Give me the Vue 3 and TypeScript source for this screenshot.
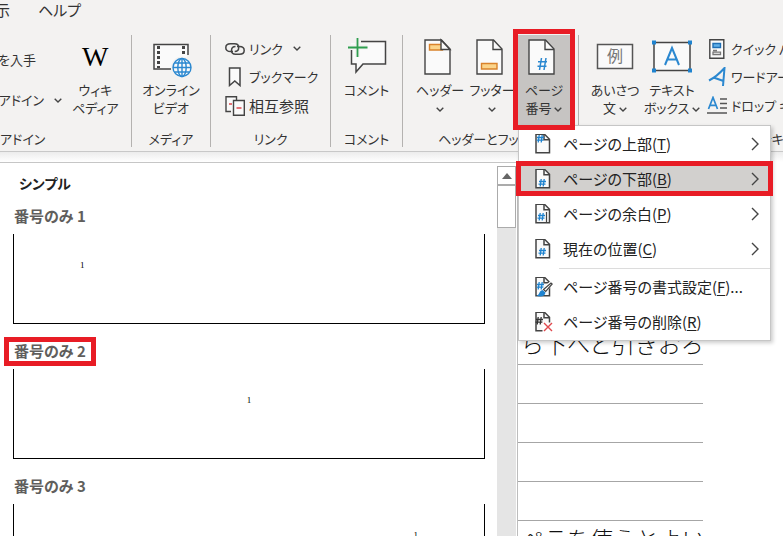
<script setup lang="ts">
type MenuIcon = 'top' | 'bottom' | 'margin' | 'current' | 'format' | 'remove'

interface MenuEntry {
  icon: MenuIcon
  text: string
  key: string
  tail: string
  submenu: boolean
  active?: boolean
  separated?: boolean
}

interface GalleryItem {
  name: string
  align: 'left' | 'center' | 'right'
  marked?: boolean
}

const tabs: string[] = ['表示', 'ヘルプ']

const menu: MenuEntry[] = [
  { icon: 'top', text: 'ページの上部(', key: 'T', tail: ')', submenu: true },
  { icon: 'bottom', text: 'ページの下部(', key: 'B', tail: ')', submenu: true, active: true },
  { icon: 'margin', text: 'ページの余白(', key: 'P', tail: ')', submenu: true },
  { icon: 'current', text: '現在の位置(', key: 'C', tail: ')', submenu: true },
  { icon: 'format', text: 'ページ番号の書式設定(', key: 'F', tail: ')...', submenu: false, separated: true },
  { icon: 'remove', text: 'ページ番号の削除(', key: 'R', tail: ')', submenu: false },
]

const gallery: GalleryItem[] = [
  { name: '番号のみ 1', align: 'left' },
  { name: '番号のみ 2', align: 'center', marked: true },
  { name: '番号のみ 3', align: 'right' },
]

const lines: string[] = ['ら下へと引きおろ', '', '', '', '', 'ペラを使うとよい']

const hashAt: Record<MenuIcon, string> = {
  top: 'translate(2 1)',
  bottom: 'translate(4 10)',
  margin: 'translate(3 9)',
  current: 'translate(4 9)',
  format: 'translate(2 5)',
  remove: 'translate(1 5)',
}
</script>

<template>
  <div class="app">
    <header class="ribbon">
      <nav class="tabs">
        <button v-for="tab in tabs" :key="tab" class="tab">{{ tab }}</button>
      </nav>

      <div class="groups">
        <section class="group addins">
          <div class="tools">
            <div class="stack wide">
              <button class="small">を入手</button>
              <button class="small">
                アドイン
                <svg class="chev" viewBox="0 0 8 5"><path d="M.7.7 4 4 7.3.7" /></svg>
              </button>
            </div>
            <button class="large">
              <span class="pic wiki">W</span>
              <span>ウィキ</span>
              <span>ペディア</span>
            </button>
          </div>
          <h2 class="caption">アドイン</h2>
        </section>

        <section class="group media">
          <div class="tools centered">
            <button class="large">
              <svg class="pic" viewBox="0 0 40 40">
                <path d="M2 10h34v24H2z" fill="#fafafa" />
                <path d="M37 20V9.500H3V34h17" fill="none" stroke="#444" stroke-width="1.500" />
                <path d="M7.500 11v22M32.500 11v10" fill="none" stroke="#444" stroke-width="3" stroke-dasharray="3 2" />
                <circle cx="31" cy="32.500" r="11" fill="#f3f2f1" />
                <g fill="none" stroke="#2b88d0" stroke-width="1.400">
                  <circle cx="31" cy="32.500" r="9" fill="#fafafa" />
                  <ellipse cx="31" cy="32.500" rx="4.200" ry="9" />
                  <path d="M31 23.500v18M22 32.500h18M23.500 28h15M23.500 37h15" />
                </g>
              </svg>
              <span>オンライン</span>
              <span>ビデオ</span>
            </button>
          </div>
          <h2 class="caption">メディア</h2>
        </section>

        <section class="group links">
          <div class="tools">
            <div class="stack">
              <button class="small">
                <svg class="mini" viewBox="0 0 20 20">
                  <g fill="none" stroke="#444" stroke-width="1.500">
                    <path d="M8 12.500H5.500C2.500 12.500.8 11 .8 8.700S2.500 4.800 5.500 4.800h4c3 0 4.200 1.700 4.200 3.700 0 2.200-1.500 4-4 4" />
                    <path d="M12 7.500h2.500c3 0 4.700 1.600 4.700 3.900s-1.700 3.800-4.700 3.800h-4c-3 0-4-1.700-4-3.700 0-2.200 1.500-4 4-4" />
                  </g>
                </svg>
                リンク
                <svg class="chev" viewBox="0 0 8 5"><path d="M.7.7 4 4 7.3.7" /></svg>
              </button>
              <button class="small">
                <svg class="mini" viewBox="0 0 20 20">
                  <path d="M4.500 1h10.500v17.500L9.800 14l-5.300 4.500z" fill="#fafafa" stroke="#444" stroke-width="1.500" />
                </svg>
                ブックマーク
              </button>
              <button class="small kanji">
                <svg class="mini" viewBox="0 0 20 20">
                  <g fill="#fafafa" stroke="#444" stroke-width="1.400">
                    <path d="M6 15.500H1V.8h10.500V4" />
                    <path d="M8.500 4.500h10.800v14.800H8.500z" />
                  </g>
                  <path d="M4 8h3M11.500 12h5" stroke="#e0484d" stroke-width="1.500" />
                </svg>
                相互参照
              </button>
            </div>
          </div>
          <h2 class="caption">リンク</h2>
        </section>

        <section class="group comments">
          <div class="tools centered">
            <button class="large">
              <svg class="pic" viewBox="0 0 40 40">
                <path d="M4 8h34v22H15l-7 8v-8H4z" fill="#fafafa" />
                <path d="M14 6.500h24.500V29H16l-7 8v-8H4.500V15" fill="none" stroke="#444" stroke-width="1.500" />
                <path d="M10.500 2v20M1 12h19.500" stroke="#f3f2f1" stroke-width="5" />
                <path d="M10.500 3v19M1 12.500h19.500" stroke="#2f9e4f" stroke-width="1.800" />
              </svg>
              <span>コメント</span>
            </button>
          </div>
          <h2 class="caption">コメント</h2>
        </section>

        <section class="group headers">
          <div class="tools">
            <button class="large slot">
              <svg class="pic" viewBox="0 0 40 40">
                <path d="M5 5h16.500L30 14v25H5z" fill="#fafafa" stroke="#444" stroke-width="1.400" />
                <path d="M9.500 9.500h13v5.500h-13z" fill="#fbd48a" stroke="#d9822b" stroke-width="1.400" />
                <path d="M21 5v9.500h9z" fill="#fafafa" stroke="#444" stroke-width="1.400" />
              </svg>
              <span>ヘッダー</span>
              <span><svg class="chev" viewBox="0 0 8 5"><path d="M.7.7 4 4 7.3.7" /></svg></span>
            </button>
            <button class="large slot">
              <svg class="pic" viewBox="0 0 40 40">
                <path d="M5 5h16.500L30 14v25H5z" fill="#fafafa" stroke="#444" stroke-width="1.400" />
                <path d="M21 5v9.500h9" fill="none" stroke="#444" stroke-width="1.400" />
                <path d="M9.500 28.500H25V34H9.500z" fill="#fbd48a" stroke="#d9822b" stroke-width="1.400" />
              </svg>
              <span>フッター</span>
              <span><svg class="chev" viewBox="0 0 8 5"><path d="M.7.7 4 4 7.3.7" /></svg></span>
            </button>
            <div class="dropdown">
              <button class="large slot open" aria-haspopup="menu" aria-expanded="true">
                <svg class="pic" viewBox="0 0 40 40">
                  <path d="M5 5h16.500L30 14v25H5z" fill="#fafafa" stroke="#444" stroke-width="1.400" />
                  <path d="M21 5v9.500h9" fill="none" stroke="#444" stroke-width="1.400" />
                  <path d="M17.500 23l-2 12M22 23l-2 12M14 26.700h9M13.500 31.300h9" stroke="#2b88d0" stroke-width="1.500" />
                </svg>
                <span>ページ</span>
                <span>番号 <svg class="chev" viewBox="0 0 8 5"><path d="M.7.7 4 4 7.3.7" /></svg></span>
              </button>
              <div class="menu" role="menu">
                <template v-for="entry in menu" :key="entry.icon">
                  <hr v-if="entry.separated" class="rule">
                  <button class="entry" :class="{ active: entry.active }" role="menuitem">
                    <svg class="mini" viewBox="0 0 20 20">
                      <path d="M3 .3h8.500l5 5v13.500H3z" fill="#fafafa" stroke="#444" stroke-width="1.500" />
                      <path d="M11 .3v5.500h5.500" fill="none" stroke="#444" stroke-width="1.500" />
                      <path
                        :transform="hashAt[entry.icon]"
                        d="M4.200 0 3.200 7.500M7.200 0l-1 7.500M2 2.500h7M1.500 5.200h7"
                        :stroke="entry.icon === 'remove' ? '#333' : '#1f83cf'"
                        stroke-width="1.300"
                      />
                      <path v-if="entry.icon === 'margin'" d="M13.500 8v10" stroke="#444" stroke-width="1.200" />
                      <g v-if="entry.icon === 'format'">
                        <path d="M9 12 17 4.500l3 3-7.500 8z" fill="#fff" />
                        <path d="M10.500 12.500 18 6l1.200 1-6.500 7.500z" fill="#fff" stroke="#444" stroke-width="1.200" />
                        <path d="M3.500 18.500c3 0 2.500-5 6-5.500l3 2.500c-.5 4-5 5-9 3z" fill="#1f83cf" />
                      </g>
                      <g v-if="entry.icon === 'remove'">
                        <path d="M9.500 10.500h10V20h-10z" fill="#fff" />
                        <path d="m11 11 8 8m0-8-8 8" stroke="#e0484d" stroke-width="1.400" />
                      </g>
                    </svg>
                    <span class="words">{{ entry.text }}<u>{{ entry.key }}</u>{{ entry.tail }}</span>
                    <svg v-if="entry.submenu" class="arrow" viewBox="0 0 8 14"><path d="m1 1 6 6-6 6" /></svg>
                  </button>
                </template>
              </div>
            </div>
          </div>
          <h2 class="caption">ヘッダーとフッター</h2>
        </section>

        <section class="group texts">
          <div class="tools">
            <button class="large greet">
              <svg class="pic" viewBox="0 0 40 40">
                <path d="M2.500 9.500h35v24h-35z" fill="#fafafa" stroke="#555" stroke-width="1.500" />
                <text x="20" y="27" text-anchor="middle" font-size="16" fill="#777">例</text>
              </svg>
              <span>あいさつ</span>
              <span>文 <svg class="chev" viewBox="0 0 8 5"><path d="M.7.7 4 4 7.3.7" /></svg></span>
            </button>
            <button class="large box">
              <svg class="pic" viewBox="0 0 40 40">
                <path d="M2 7.500h36v28H2z" fill="#fafafa" stroke="#444" stroke-width="1.500" />
                <path d="M0 5.500h4v4H0zM36 5.500h4v4h-4zM0 33.500h4v4H0zM36 33.500h4v4h-4z" fill="#1f83cf" />
                <path d="m13 30 7-17 7 17M15.500 24.500h9" fill="none" stroke="#2b88d0" stroke-width="2" />
              </svg>
              <span>テキスト</span>
              <span>ボックス <svg class="chev" viewBox="0 0 8 5"><path d="M.7.7 4 4 7.3.7" /></svg></span>
            </button>
            <div class="stack">
              <button class="small">
                <svg class="mini" viewBox="0 0 20 20">
                  <path d="M2.800.8h14v18.400h-14z" fill="#fafafa" stroke="#444" stroke-width="1.400" />
                  <path d="M6 4.500h7.500v4H6z" fill="#62b0e8" stroke="#1f6fb5" stroke-width="1.400" />
                  <path d="M6 11.500h4M6 15.500h7.500v-2.300H6z" fill="none" stroke="#777" stroke-width="1.300" />
                </svg>
                クイック パーツ
              </button>
              <button class="small">
                <svg class="mini" viewBox="0 0 20 20">
                  <path d="M2 13.500C8 10.500 13 6 17.500 1L16 19M6.500 10.500 16.500 14" fill="none" stroke="#2b88d0" stroke-width="2" />
                </svg>
                ワードアート
              </button>
              <button class="small">
                <svg class="mini" viewBox="0 0 20 20">
                  <path d="M1.500 13 6 1.500 10.500 13M3 9.300h6" fill="none" stroke="#2b88d0" stroke-width="1.700" />
                  <path d="M13 3h7M13 7.500h7M13 12h7M0 17h20" stroke="#555" stroke-width="1.400" />
                </svg>
                ドロップ キャップ
              </button>
            </div>
          </div>
          <h2 class="caption">テキスト</h2>
        </section>
      </div>
    </header>

    <main class="workspace">
      <aside class="gallery">
        <div class="list">
          <h2 class="title">シンプル</h2>
          <section v-for="item in gallery" :key="item.name" class="item">
            <h3 class="name"><span :class="{ marked: item.marked }">{{ item.name }}</span></h3>
            <button class="preview" :class="item.align" :aria-label="item.name">1</button>
          </section>
        </div>
        <div class="scroll">
          <button class="up" aria-label="上へスクロール">
            <svg viewBox="0 0 10 6"><path d="M0 6 5 0l5 6z" fill="#666" /></svg>
          </button>
          <div class="thumb"></div>
        </div>
      </aside>
      <article class="document">
        <p v-for="(line, i) in lines" :key="i" class="line">{{ line }}</p>
      </article>
    </main>
  </div>
</template>

<style>
body {
  margin: 0;
  background: #fff;
}
</style>

<style scoped>
.app {
  display: flex;
  flex-direction: column;
  height: 100vh;
  overflow: hidden;
  color: #333;
  font: 13px/18px "Noto Sans CJK JP", sans-serif;
  font-feature-settings: "palt";
}
button {
  margin: 0;
  padding: 0;
  border: 0;
  background: none;
  color: inherit;
  font: inherit;
  font-feature-settings: inherit;
  white-space: nowrap;
}
h2,
h3,
p {
  margin: 0;
  font: inherit;
}
.ribbon {
  position: relative;
  z-index: 2;
  flex: none;
  padding-bottom: 4px;
  border-bottom: 1px solid #c8c8c8;
  background: #f3f2f1;
}
.tabs {
  display: flex;
  gap: 28px;
  height: 35px;
  margin-left: -20px;
}
.tab {
  height: 20px;
  font-size: 15px;
}
.groups {
  display: flex;
}
.group {
  flex: none;
  box-sizing: border-box;
  border-right: 1px solid #b4b2b0;
}
.tools {
  display: flex;
  height: 96px;
}
.centered {
  justify-content: center;
}
.caption {
  line-height: 16px;
  text-align: center;
  white-space: nowrap;
}
.addins {
  width: 132px;
}
.addins .caption {
  margin-right: 88px;
}
.media {
  width: 79px;
}
.links {
  width: 120px;
}
.links .tools {
  padding-left: 14px;
}
.comments {
  width: 72px;
}
.headers {
  width: 176px;
}
.headers .tools {
  padding-left: 11px;
}
.texts {
  width: 408px;
}
.texts .tools {
  padding-left: 12px;
}
.large {
  display: flex;
  flex-direction: column;
  align-items: center;
  height: 90px;
}
.large span {
  min-height: 18px;
}
.slot {
  width: 52px;
}
.greet {
  width: 48px;
}
.box {
  width: 66px;
  margin-right: 2px;
}
.pic {
  display: block;
  flex: none;
  width: 40px;
  height: 40px;
  margin-bottom: 6px;
  overflow: visible;
}
.wiki {
  color: #000;
  font: 28px/44px "Liberation Serif", serif;
  text-align: center;
}
.stack {
  display: flex;
  flex-direction: column;
}
.small {
  display: flex;
  align-items: center;
  gap: 4px;
  height: 29px;
}
.kanji {
  font-size: 15px;
}
.small .chev {
  margin-left: 6px;
}
.stack .small:first-child {
  height: 27px;
}
.wide {
  align-items: flex-end;
  width: 62px;
  margin-right: 10px;
  padding-top: 5px;
}
.wide .small,
.wide .small:first-child {
  height: 40px;
}
.wide .small:first-child {
  margin-right: 26px;
}
.mini {
  flex: none;
  width: 20px;
  height: 20px;
}
.chev {
  flex: none;
  width: 8px;
  height: 5px;
  vertical-align: middle;
}
.chev path,
.arrow path {
  fill: none;
  stroke: #444;
  stroke-width: 1.4;
}
.dropdown {
  position: relative;
}
.open {
  background: #c6c4c2;
}
.dropdown::after {
  content: "";
  position: absolute;
  z-index: 3;
  inset: -6px -5px 1px;
  border: 5px solid #e81c25;
  pointer-events: none;
}
.menu {
  position: absolute;
  z-index: 2;
  top: 90px;
  left: 0;
  width: 251px;
  padding-bottom: 1px;
  border: 1px solid #c6c6c6;
  background: #fff;
  box-shadow: 2px 2px 4px rgba(0, 0, 0, 0.2);
  color: #222;
}
.entry {
  position: relative;
  display: flex;
  align-items: center;
  gap: 10px;
  box-sizing: border-box;
  width: 100%;
  height: 35px;
  padding: 0 11px 0 14px;
  font-size: 15px;
}
.active {
  background: #d2d0ce;
}
.active::after {
  content: "";
  position: absolute;
  inset: 0 -3px;
  border: 5px solid #e81c25;
}
.words {
  flex: 1;
  text-align: left;
}
.words u {
  text-underline-offset: 2px;
}
.arrow {
  width: 8px;
  height: 14px;
}
.rule {
  height: 1px;
  margin: 2px 0 0 40px;
  border: 0;
  background: #dcdcdc;
}
.workspace {
  display: flex;
  flex: 1;
  min-height: 0;
  padding-top: 10px;
  background: linear-gradient(#ececec, #fff 10px);
}
.gallery {
  display: flex;
  flex: none;
  box-sizing: border-box;
  width: 518px;
  border-top: 1px solid #c6c6c6;
  border-right: 1px solid #bdbdbd;
  background: #fff;
  overflow: hidden;
}
.list {
  flex: 1;
  padding: 10px 12px 0 13px;
}
.title {
  margin: 0 0 13px 6px;
  color: #222;
  font-size: 14px;
  font-weight: 700;
  line-height: 20px;
}
.item {
  margin-bottom: 17px;
}
.name {
  margin-bottom: 8px;
  padding-left: 1px;
  color: #605e5c;
  font-size: 15px;
  font-weight: 700;
  line-height: 20px;
}
.marked {
  position: relative;
}
.marked::after {
  content: "";
  position: absolute;
  inset: -3px -10px -5px;
  border: 5px solid #e81c25;
}
.preview {
  display: flex;
  box-sizing: border-box;
  width: 100%;
  height: 90px;
  padding: 26px 66px 0;
  border: 1px solid #000;
  border-top: 0;
  color: #000;
  font: 9px/10px "Liberation Serif", serif;
}
.left {
  justify-content: flex-start;
}
.center {
  justify-content: center;
}
.right {
  justify-content: flex-end;
}
.scroll {
  flex: none;
  width: 19px;
  margin: 3px 1px 0 0;
  background: #e5e5e5;
}
.up,
.thumb {
  display: grid;
  place-items: center;
  box-sizing: border-box;
  width: 100%;
  height: 19px;
  border: 1px solid #ababab;
  background: #fff;
}
.up svg {
  width: 10px;
  height: 6px;
}
.thumb {
  height: 43px;
}
.document {
  flex: 1;
  padding-top: 164px;
}
.line {
  box-sizing: border-box;
  width: 185px;
  height: 39px;
  padding-left: 3px;
  border-bottom: 1px solid #a6a6a6;
  color: #111;
  font-size: 23px;
  font-weight: 300;
  line-height: 34px;
  white-space: nowrap;
  font-feature-settings: normal;
}
</style>
